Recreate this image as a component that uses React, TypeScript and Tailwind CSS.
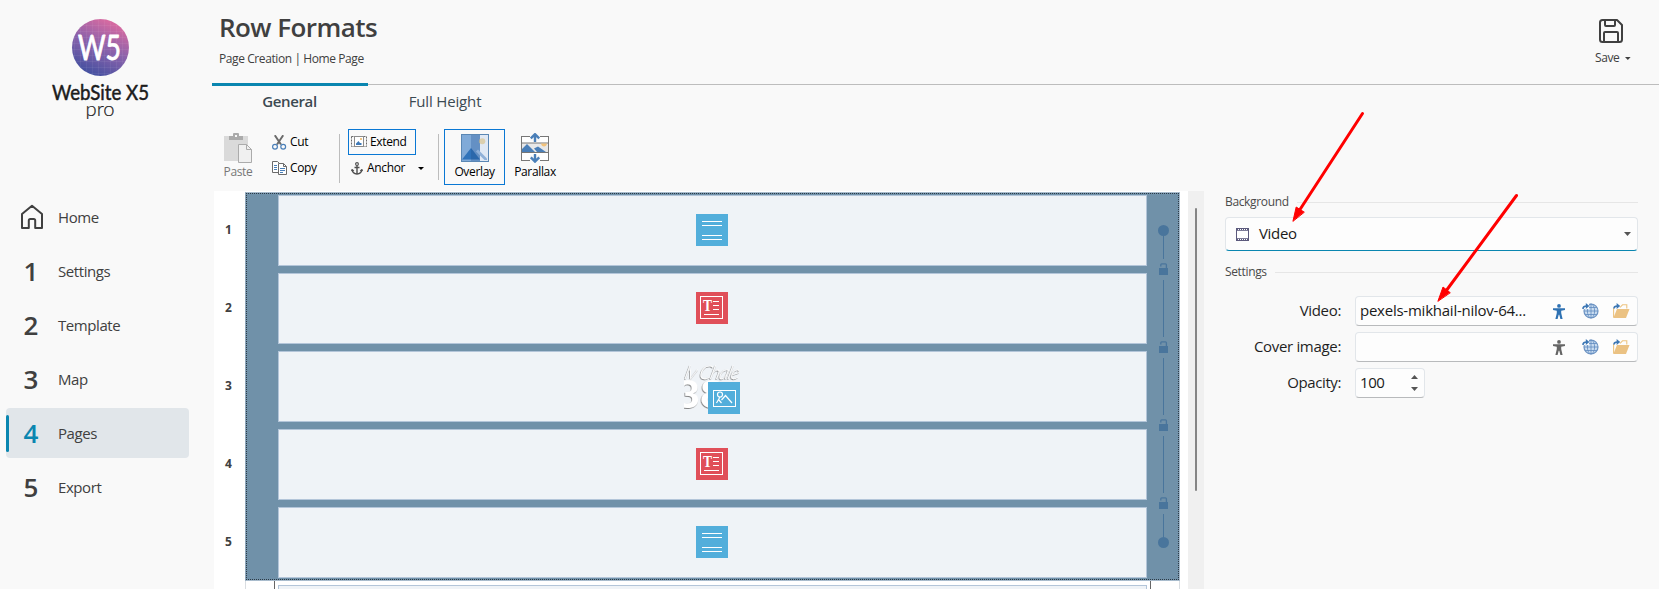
import { ReactNode } from 'react';
import clsx from 'clsx';

const NAV = [
  { key: 'home', label: 'Home' },
  { key: '1', label: 'Settings' },
  { key: '2', label: 'Template' },
  { key: '3', label: 'Map' },
  { key: '4', label: 'Pages', active: true },
  { key: '5', label: 'Export' },
];

const ROWS = ['spacer', 'text', 'image', 'text', 'spacer'];

function HomeIcon() {
  return (
    <svg width="24" height="26" viewBox="0 0 24 26" fill="none" stroke="#404040" strokeWidth="2" strokeLinejoin="round" className="relative left-px">
      <path d="M2 10 L12 1.8 L22 10 V24 H15.2 V16.5 Q15.2 15 13.7 15 H10.3 Q8.8 15 8.8 16.5 V24 H2 Z" />
    </svg>
  );
}

function Caret({ className }: { className?: string }) {
  return (
    <svg width="6" height="3" viewBox="0 0 6 3" className={className} fill="currentColor">
      <path d="M0 0 H6 L3 3 Z" />
    </svg>
  );
}

function SaveIcon() {
  return (
    <svg width="24" height="24" viewBox="0 0 24 24" fill="none" stroke="#404040" strokeWidth="2" strokeLinejoin="round">
      <path d="M3.5 1 H18 L23 6 V20.5 Q23 23 20.5 23 H3.5 Q1 23 1 20.5 V3.5 Q1 1 3.5 1 Z" />
      <path d="M6 1 V6 Q6 7 7 7 H15 Q16 7 16 6 V1" />
      <path d="M5 23 V14 Q5 13 6 13 H18 Q19 13 19 14 V23" />
    </svg>
  );
}

function Logo() {
  return (
    <svg width="100" height="104" viewBox="0 0 100 104" className="mt-[19px] ml-[50px]">
      <defs>
        <linearGradient id="logo" x1="0.3" y1="1" x2="0.75" y2="0">
          <stop offset="0" stopColor="#3f4f9f" />
          <stop offset="0.5" stopColor="#8a62ab" />
          <stop offset="1" stopColor="#e26b9f" />
        </linearGradient>
        <pattern id="mesh" width="6" height="6" patternUnits="userSpaceOnUse">
          <path d="M0 0 H6 M0 0 V6" stroke="#fff" strokeOpacity="0.16" strokeWidth="0.7" />
        </pattern>
      </defs>
      <circle cx="50.5" cy="28.5" r="28.5" fill="url(#logo)" />
      <circle cx="50.5" cy="28.5" r="28.5" fill="url(#mesh)" />
      <text x="28" y="41" fontSize="35" textLength="43" lengthAdjust="spacingAndGlyphs" fill="#fff" stroke="#fff" strokeWidth="0.9" strokeLinejoin="round" fontFamily="Lato, sans-serif">
        W5
      </text>
      <g fill="#1c1c1c" fontFamily="Lato, sans-serif">
        <text x="2" y="81" fontSize="20.5" textLength="97" lengthAdjust="spacingAndGlyphs" stroke="#1c1c1c" strokeWidth="0.5" strokeLinejoin="round">
          WebSite X5
        </text>
        <text x="35.5" y="96.5" fontSize="20" fontWeight="300" textLength="29" lengthAdjust="spacingAndGlyphs" stroke="#1c1c1c" strokeWidth="0.2">
          pro
        </text>
      </g>
    </svg>
  );
}

function PasteIcon() {
  return (
    <svg width="28" height="30" viewBox="0 0 28 30">
      <path d="M0 3 H24 V12 H14 V28 H0 Z" fill="#dadada" />
      <path d="M5 3 H9 V1 Q9 0 10 0 H14 Q15 0 15 1 V3 H19 V7 H5 Z" fill="#ababab" />
      <rect x="11" y="2" width="2" height="2" fill="#f9f9f9" />
      <path d="M14.5 11.5 H22.5 L27.5 16.5 V29.5 H14.5 Z" fill="#f0f0f0" stroke="#ababab" />
      <path d="M22.5 11.5 V16.5 H27.5" fill="none" stroke="#ababab" />
    </svg>
  );
}

function CutIcon() {
  return (
    <svg width="15" height="15" viewBox="0 0 15 15" fill="none">
      <path d="M2.8 0.3 L9 9.5 M11.2 0.3 L5 9.5" stroke="#6b6b6b" strokeWidth="2" />
      <circle cx="3" cy="11.7" r="2.4" stroke="#4a7fb8" strokeWidth="1.2" />
      <circle cx="11.2" cy="11.7" r="2.4" stroke="#4a7fb8" strokeWidth="1.2" />
    </svg>
  );
}

function CopyIcon() {
  return (
    <svg width="15" height="14" viewBox="0 0 15 14" fill="none">
      <path d="M0.5 0.5 H5.5 L8.5 3.5 V11.5 H0.5 Z" fill="#fff" stroke="#6b6b6b" />
      <path d="M2 4.5 H5 M2 6.5 H5 M2 8.5 H5" stroke="#4a7fb8" />
      <path d="M6.5 2.5 H11.5 L14.5 5.5 V13.5 H6.5 Z" fill="#fff" stroke="#6b6b6b" />
      <path d="M11.5 2.5 V5.5 H14.5" stroke="#6b6b6b" />
      <path d="M8 7.5 H13 M8 9.5 H13 M8 11.5 H11" stroke="#4a7fb8" />
    </svg>
  );
}

function ExtendIcon() {
  return (
    <svg width="16" height="12" viewBox="0 0 16 12" fill="none">
      <rect x="0.5" y="0.5" width="15" height="10" stroke="#6b6b6b" strokeDasharray="2 1" />
      <rect x="3.5" y="0.5" width="9" height="10" fill="#fff" stroke="#8b8b8b" />
      <path d="M5 9 V7.5 L7.5 5 L9 7 L10.5 7 V9 Z" fill="#3f7ab8" />
      <rect x="9" y="2" width="2" height="2" fill="#f0c584" />
    </svg>
  );
}

function AnchorIcon() {
  return (
    <svg width="12" height="13" viewBox="0 0 12 13" fill="none" stroke="#4f4f4f">
      <circle cx="6" cy="2" r="1.4" strokeWidth="1.1" />
      <path d="M6 3.5 V12 M3.5 5.5 H8.5" strokeWidth="1.4" />
      <path d="M1.2 8 Q1.6 11.6 6 12 Q10.4 11.6 10.8 8" strokeWidth="1.5" />
      <path d="M0 9.2 L1.2 7 L3 9 M12 9.2 L10.8 7 L9 9" strokeWidth="0.9" />
    </svg>
  );
}

function OverlayIcon() {
  return (
    <svg width="28" height="28" viewBox="0 0 28 28">
      <rect width="10" height="28" fill="#80aad8" />
      <rect x="10" width="9" height="28" fill="#6490c4" />
      <rect x="19" width="9" height="28" fill="#dfe8f4" />
      <path d="M1 25.5 L10 14 V25.5 Z" fill="#3073ba" />
      <path d="M10 14 L19 25.5 H10 Z" fill="#2b68ab" />
      <path d="M15 17.5 L17 15.5 L26 24.5 V26 H23.5 Z" fill="#8fb0d8" />
      <circle cx="21.3" cy="7.2" r="3" fill="#dbcfae" />
      <path d="M19 4.9 V9.5 A3 3 0 0 1 19 4.9" fill="#a8aa9c" />
      <rect x="0.5" y="0.5" width="27" height="27" fill="none" stroke="#5a87b4" />
    </svg>
  );
}

function ParallaxIcon() {
  return (
    <svg width="28" height="30" viewBox="0 0 28 30">
      <rect x="0.5" y="3.5" width="27" height="24" fill="#fff" stroke="#777" />
      <rect x="1" y="10" width="26" height="10" fill="#e8e8e8" />
      <path d="M0 10 H28 M0 19.5 H28" stroke="#777" />
      <path d="M1 19 V16 L6 11 L14 19 Z M13 15.5 L17 13.5 L25 19 H16 Z" fill="#4a7fb8" />
      <path d="M20 10.5 H26 Q25.5 13.5 23 13.5 Q20.5 13.5 20 10.5" fill="#f3c27a" />
      <rect x="9" y="1" width="10" height="7" fill="#f9f9f9" />
      <rect x="9" y="22" width="10" height="8" fill="#f9f9f9" />
      <path d="M14 9 V2 M9.8 5.4 L14 1.2 L18.2 5.4" fill="none" stroke="#4a7fb8" strokeWidth="2.4" />
      <path d="M14 21 V28 M9.8 24.4 L14 28.6 L18.2 24.4" fill="none" stroke="#4a7fb8" strokeWidth="2.4" />
    </svg>
  );
}

function RowObject({ type }: { type: string }) {
  if (type === 'spacer') {
    return (
      <svg width="32" height="32" viewBox="0 0 32 32">
        <rect width="32" height="32" fill="#52aedb" />
        <path d="M6 7.5 H26 M6 11.5 H26 M6 21.5 H26 M6 25.5 H26" stroke="#fff" />
      </svg>
    );
  }
  if (type === 'text') {
    return (
      <svg width="32" height="32" viewBox="0 0 32 32">
        <rect width="32" height="32" fill="#e04f59" />
        <rect x="4.5" y="4.5" width="22" height="22" fill="none" stroke="#fff" />
        <text x="7" y="19" fontSize="16" fontWeight="700" fontFamily="'Liberation Serif', serif" fill="#fff" textLength="9" lengthAdjust="spacingAndGlyphs">
          T
        </text>
        <path d="M17 9.5 H23 M17 13.5 H23 M17 17.5 H23 M8 22.5 H23" stroke="#fff" />
      </svg>
    );
  }
  return (
    <svg width="56" height="52" viewBox="0 0 56 52" className="mt-1">
      <defs>
        <filter id="cut" x="-10%" y="-10%" width="120%" height="120%">
          <feDropShadow dx="-0.6" dy="0.8" stdDeviation="0.25" floodColor="#666" floodOpacity="0.95" />
        </filter>
        <clipPath id="thumb">
          <rect x="0" y="0" width="55" height="50" />
        </clipPath>
      </defs>
      <g clipPath="url(#thumb)">
        <g fill="#fff" filter="url(#cut)">
          <text x="-9" y="46" fontSize="38" fontWeight="900" fontFamily="Lato, sans-serif" textLength="50" lengthAdjust="spacingAndGlyphs">
            38
          </text>
          <text x="4" y="17" fontSize="19" fontWeight="300" fontStyle="italic" fontFamily="Lato, sans-serif" textLength="55" transform="skewX(-14)">
            ly Chale
          </text>
        </g>
      </g>
      <rect x="24" y="20" width="32" height="32" fill="#52aedb" />
      <rect x="29.5" y="28.5" width="22" height="16" fill="none" stroke="#fff" />
      <circle cx="36" cy="32.5" r="2.5" fill="none" stroke="#fff" strokeWidth="1.2" />
      <path d="M36 35 L32.5 41 M34.5 37.5 L37.5 41 M37.5 38 L41.5 33.5 L48 41" fill="none" stroke="#fff" strokeWidth="1.2" />
    </svg>
  );
}

function LinkRail() {
  const locks = [71, 149, 227, 305];
  return (
    <svg width="30" height="384" viewBox="0 0 30 384" className="shrink-0">
      <g fill="#49759c" stroke="none">
        <circle cx="16.5" cy="36.5" r="5.5" />
        <circle cx="16.5" cy="348.5" r="5.5" />
        <rect x="16" y="42" width="1" height="23" />
        <rect x="16" y="86" width="1" height="57" />
        <rect x="16" y="164" width="1" height="57" />
        <rect x="16" y="242" width="1" height="57" />
        <rect x="16" y="320" width="1" height="24" />
      </g>
      {locks.map((y) => (
        <g key={y} transform={`translate(12 ${y - 2})`}>
          <rect y="5" width="9" height="7" fill="#49759c" />
          <path d="M1.8 3.5 V1.7 Q1.8 0.8 2.8 0.8 H6.4 Q7.4 0.8 7.4 1.7 V5" fill="none" stroke="#49759c" strokeWidth="1.3" />
        </g>
      ))}
    </svg>
  );
}

function FilmIcon() {
  return (
    <svg width="13" height="13" viewBox="0 0 13 13" fill="none">
      <rect x="0.5" y="0.5" width="12" height="12" fill="#fff" stroke="#5c5a7d" />
      <path d="M1 1.5 H13 M1 11.5 H13" stroke="#5c5a7d" strokeDasharray="1 1" />
      <path d="M1 2.5 H12 M1 10.5 H12" stroke="#5c5a7d" strokeWidth="0.8" />
    </svg>
  );
}

function PersonIcon({ color }: { color: string }) {
  return (
    <svg width="12" height="15" viewBox="0 0 12 15" fill={color}>
      <circle cx="6" cy="1.9" r="1.9" />
      <path d="M0 4.2 H12 V6 L8.2 6.7 V9 L9.6 15 H7.4 L6.3 10.8 H5.7 L4.6 15 H2.4 L3.8 9 V6.7 L0 6 Z" />
    </svg>
  );
}

function GlobeIcon() {
  return (
    <svg width="17" height="16" viewBox="0 0 17 16" fill="none">
      <circle cx="9" cy="8" r="7" fill="#c9dcf0" stroke="#6b92c2" strokeWidth="1.2" />
      <ellipse cx="9" cy="8" rx="3.6" ry="7" stroke="#5f8abf" strokeWidth="0.8" />
      <path d="M9 1 V15 M2 8 H16 M3.4 4.5 H14.6 M3.4 11.5 H14.6" stroke="#5f8abf" strokeWidth="0.8" />
      <path d="M0 0 H7 V6 H0 Z" fill="#fdfdfd" />
      <path d="M1 6 Q0.8 3 5 3" stroke="#3c77b5" strokeWidth="1.6" />
      <path d="M3.8 0 L7.4 3 L3.8 6 Z" fill="#3c77b5" />
    </svg>
  );
}

function FolderIcon() {
  return (
    <svg width="17" height="16" viewBox="0 0 17 16" fill="none">
      <path d="M0.6 5 V14.5 M7 4.5 L9.5 1.8 H13.8 V5.5" stroke="#edc480" strokeWidth="1.1" />
      <path d="M4 6 H16.5 L13 15 H0.3 Z" fill="#ebc283" />
      <path d="M1 5.5 Q1 3 4.5 3" stroke="#3c77b5" strokeWidth="1.6" />
      <path d="M3.6 0 L7.2 3 L3.6 6 Z" fill="#3c77b5" />
    </svg>
  );
}

function GroupTitle({ children }: { children: ReactNode }) {
  return (
    <div className="flex h-4 items-center gap-2">
      <span className="text-[12px] tracking-[-0.35px] text-[#4a4a4a]">{children}</span>
      <div className="h-px flex-1 bg-[#e6e6e6]" />
    </div>
  );
}

function FileField({ label, value, personColor }: { label: string; value?: string; personColor: string }) {
  return (
    <div className="flex h-[30px] items-center">
      <span className="w-[116px] pb-[2px] text-right text-[15px] tracking-[-0.32px] text-[#1f1f1f]">{label}</span>
      <div className="ml-[14px] flex h-full flex-1 items-center rounded border border-[#e2e6ea] border-b-[#b8babc] bg-[#fdfdfd] pl-1 pr-[7px]">
        <span className="flex-1 pb-[2px] text-[15px] tracking-[-0.24px] text-[#1a1a1a]">{value}</span>
        <PersonIcon color={personColor} />
        <div className="ml-[17px] flex gap-[14px]">
          <GlobeIcon />
          <FolderIcon />
        </div>
      </div>
    </div>
  );
}

function Sidebar() {
  return (
    <aside className="flex w-[212px] shrink-0 flex-col">
      <Logo />
      <nav className="mt-[69px] flex flex-col gap-1 pl-[6px]">
        {NAV.map((item) => (
          <div
            key={item.key}
            className={clsx('flex h-[50px] w-[183px] items-center rounded', item.active && 'bg-[#e1e6ea]')}
          >
            <div className={clsx('h-[37px] w-[3px] rounded-full', item.active && 'bg-[#0a86b0]')} />
            <div
              className={clsx(
                'ml-[6px] flex w-8 justify-center text-[26px] font-semibold',
                item.active ? 'text-[#0a86b0]' : 'text-[#404040]',
              )}
            >
              {item.key === 'home' ? <HomeIcon /> : item.key}
            </div>
            <span
              className={clsx(
                'ml-[11px] text-[15px] text-[#404040]',
                item.active ? 'font-medium tracking-[-0.45px]' : 'tracking-[-0.42px]',
              )}
            >
              {item.label}
            </span>
          </div>
        ))}
      </nav>
    </aside>
  );
}

function Header() {
  return (
    <header className="flex h-[83px] justify-between">
      <div className="pl-[7px]">
        <h1 className="mt-[11px] text-[26px] leading-8 font-semibold tracking-[-0.55px] text-[#404040]">Row Formats</h1>
        <p className="mt-2 text-[12px] leading-4 tracking-[-0.41px] text-[#404040]">Page Creation | Home Page</p>
      </div>
      <div className="mr-[28px] flex w-9 flex-col pt-[19px] text-[#404040]">
        <div className="pl-1">
          <SaveIcon />
        </div>
        <div className="mt-[7px] flex items-center gap-[6px] text-[12px] leading-4 tracking-[-0.4px]">
          Save
          <Caret />
        </div>
      </div>
    </header>
  );
}

function Toolbar() {
  return (
    <div className="flex h-[68px] items-start pt-[6px] text-[12px] leading-4 tracking-[-0.35px] text-black">
      <div className="ml-2 mt-1 flex w-9 flex-col items-center text-[#777]">
        <PasteIcon />
        <span className="mt-[1px]">Paste</span>
      </div>
      <div className="ml-4 mt-[5px] flex w-[46px] flex-col gap-[10px]">
        <div className="flex items-center gap-[3px]"><CutIcon />Cut</div>
        <div className="flex items-center gap-[3px]"><CopyIcon />Copy</div>
      </div>
      <div className="ml-[21px] mt-[5px] h-[49px] w-px bg-[#bdbdbd]" />
      <div className="ml-2 flex w-[86px] flex-col">
        <div className="flex h-[26px] w-[68px] items-center gap-[3px] border border-[#0a78d4] pl-[2px]"><ExtendIcon />Extend</div>
        <div className="mt-[5px] flex items-center pl-[3px]">
          <AnchorIcon />
          <span className="ml-1 w-[39px]">Anchor</span>
          <Caret className="ml-3" />
        </div>
      </div>
      <div className="ml-1 mt-[5px] h-[46px] w-px bg-[#bdbdbd]" />
      <div className="ml-[5px] flex h-[56px] w-[61px] flex-col items-center border border-[#0a78d4] pt-1">
        <OverlayIcon />
        <span className="mt-[2px]">Overlay</span>
      </div>
      <div className="ml-[5px] flex w-[50px] flex-col items-center pt-1">
        <ParallaxIcon />
        <span className="mt-[1px]">Parallax</span>
      </div>
    </div>
  );
}

function RowCanvas() {
  return (
    <div className="ml-[2px] flex h-[398px] w-[974px] overflow-hidden bg-white">
      <div className="flex w-[31px] flex-col gap-[7px] pt-[3px] text-[12px] font-bold text-[#404040]">
        {ROWS.map((_, i) => (
          <div key={i} className="flex h-[71px] items-center justify-center pr-[2px]">{i + 1}</div>
        ))}
      </div>
      <div className="mt-px flex w-[935px] flex-col">
        <div className="h-[389px] shrink-0 border border-[#a9bccd] border-l-[#8fa8bc] bg-[#7091a9]">
          <div className="flex h-full border border-dotted border-[#2c3a46]">
            <div className="ml-[31px] mt-px flex w-[869px] shrink-0 flex-col gap-[7px]">
              {ROWS.map((type, i) => (
                <div key={i} className="flex h-[71px] shrink-0 items-center justify-center border border-[#b3c5d9] bg-[#eff3f7] pb-px pr-[2px]">
                  <RowObject type={type} />
                </div>
              ))}
            </div>
            <LinkRail />
          </div>
        </div>
        <div className="flex h-3 border-x border-[#d9dde1] pl-[28px] pr-[30px]">
          <div className="flex flex-1 border-x border-[#666] px-[3px] pt-1">
            <div className="h-5 w-[869px] shrink-0 border border-[#b3c5d9] bg-[#eff3f7]" />
          </div>
        </div>
      </div>
    </div>
  );
}

function PropertiesPanel() {
  return (
    <section className="ml-[21px] w-[413px] pt-[3px]">
      <GroupTitle>Background</GroupTitle>
      <div className="mt-[7px] flex h-[34px] items-center rounded border border-[#e2e6ea] border-b-[#0a86b0] bg-[#fdfdfd] pl-[10px] pr-[6px] text-[15px] tracking-[-0.32px] text-[#1a1a1a]">
        <FilmIcon />
        <span className="ml-[10px] flex-1 pb-[2px]">Video</span>
        <svg width="7" height="4" viewBox="0 0 7 4"><path d="M0 0 H7 L3.5 4 Z" fill="#555" /></svg>
      </div>
      <div className="mt-[13px]">
        <GroupTitle>Settings</GroupTitle>
      </div>
      <div className="mt-4 flex flex-col gap-[6px]">
        <FileField label="Video:" value="pexels-mikhail-nilov-64..." personColor="#2f72b3" />
        <FileField label="Cover image:" personColor="#666" />
        <div className="flex h-[30px] items-center">
          <span className="w-[116px] pb-[2px] text-right text-[15px] tracking-[-0.4px] text-[#1f1f1f]">Opacity:</span>
          <div className="ml-[14px] flex h-full w-[70px] items-center justify-between rounded border border-[#e2e6ea] border-b-[#b8babc] bg-[#fdfdfd] pl-1 pr-[6px]">
            <span className="pb-[2px] text-[15px] tracking-[-0.4px] text-[#1a1a1a]">100</span>
            <svg width="7" height="16" viewBox="0 0 7 16" fill="#555">
              <path d="M0 4 H7 L3.5 0 Z M0 12 H7 L3.5 16 Z" />
            </svg>
          </div>
        </div>
      </div>
    </section>
  );
}

// Red pointers that float above the properties panel
function Pointers() {
  return (
    <svg width="260" height="220" viewBox="1280 100 260 220" className="pointer-events-none absolute left-[1280px] top-[100px]">
      <g stroke="#ff0000" strokeWidth="3" strokeLinecap="round" fill="#ff0000">
        <path d="M1362.5 113.5 L1299 211" />
        <path d="M1516.5 195.5 L1446 291" />
        <path d="M1293 221 L1296.2 207 L1304 212 Z" strokeWidth="1" />
        <path d="M1438 301 L1443 287 L1450 292.5 Z" strokeWidth="1" />
      </g>
    </svg>
  );
}

export default function App() {
  return (
    <div className="relative flex h-[589px] w-[1659px] overflow-hidden bg-[#f9f9f9] font-['Open_Sans','Noto_Sans',sans-serif]">
      <Sidebar />
      <main className="flex flex-1 flex-col">
        <Header />
        <div className="flex h-[40px] text-[15px] tracking-[-0.35px] text-[#3c4a52]">
          <div className="w-[156px] border-t-3 border-[#0a86b0] pt-1 pr-px text-center font-semibold">General</div>
          <div className="mt-px w-[156px] border-t border-[#bdbdbd] pt-[5px] pr-[2px] text-center tracking-[-0.15px]">Full Height</div>
          <div className="mt-px flex-1 border-t border-[#bdbdbd]" />
        </div>
        <Toolbar />
        <div className="flex">
          <RowCanvas />
          <div className="flex h-[398px] w-4 justify-center bg-[#f0f0f0] pt-[17px]">
            <div className="h-[283px] w-[2px] rounded-full bg-[#858585]" />
          </div>
          <PropertiesPanel />
        </div>
      </main>
      <Pointers />
    </div>
  );
}
